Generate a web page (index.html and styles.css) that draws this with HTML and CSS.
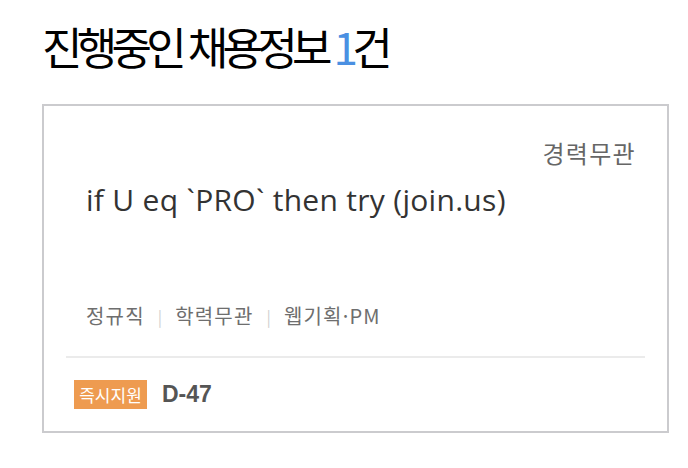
FILE: index.html
```html
<!DOCTYPE html>
<html lang="ko">
<head>
<meta charset="utf-8">
<link rel="stylesheet" href="styles.css">
</head>
<body>
<div class="page">
  <h1 class="heading">진행중인 채용정보 <span class="count">1</span>건</h1>
  <div class="card">
    <div class="card-top">
      <div class="career">경력무관</div>
      <div class="job-title">if U eq `PRO` then try (join.us)</div>
      <div class="tags">
        <span class="tag">정규직</span><span class="sep">|</span><span class="tag">학력무관</span><span class="sep">|</span><span class="tag">웹기획·PM</span>
      </div>
    </div>
    <div class="card-bottom">
      <span class="badge">즉시지원</span>
      <span class="dday">D-47</span>
    </div>
  </div>
</div>
</body>
</html>
```
FILE: styles.css
```css
* { box-sizing: border-box; }
html, body { margin: 0; padding: 0; background: #fff; }
body { font-family: "Noto Sans CJK KR", "Noto Sans", sans-serif; }
.page { padding: 18px 19px 0 42px; }
.heading {
  margin: 0;
  font-size: 44px;
  font-weight: 400;
  letter-spacing: -5.7px;
  line-height: 56px;
  color: #000;
}
.count { color: #4a90e2; }
.card {
  margin-top: 30px;
  width: 627px;
  height: 329px;
  border: 2px solid #cbcbce;
  padding: 0 22px;
}
.card-top { padding: 31px 12px 0 20px; }
.career {
  text-align: right;
  font-size: 24px;
  color: #666;
  line-height: 32px;
  letter-spacing: 1.3px;
  margin-right: -3px;
}
.job-title {
  margin-top: 11px;
  font-family: "Open Sans", "Noto Sans CJK KR", sans-serif;
  font-size: 30px;
  color: #333;
  line-height: 40px;
  letter-spacing: 0.3px;
}
.tags {
  margin: 82px -12px 0 -20px;
  padding: 0 0 26px 20px;
  font-size: 20px;
  color: #6e6e6e;
  line-height: 28px;
  display: flex;
  align-items: center;
  border-bottom: 2px solid #ebebeb;
  letter-spacing: 1.2px;
}
.sep { color: #d0d0d0; margin: 0 13px; font-size: 16px; letter-spacing: 0; }
.card-bottom {
  display: flex;
  align-items: center;
  padding-top: 22px;
  padding-left: 8px;
}
.badge {
  background: #ee9b50;
  color: #fff;
  font-size: 17px;
  line-height: 29px;
  height: 29px;
  width: 73px;
  text-align: center;
  letter-spacing: 0;
}
.dday {
  margin-left: 15px;
  font-family: "Liberation Sans", sans-serif;
  font-weight: 700;
  font-size: 23px;
  color: #555;
}
```
